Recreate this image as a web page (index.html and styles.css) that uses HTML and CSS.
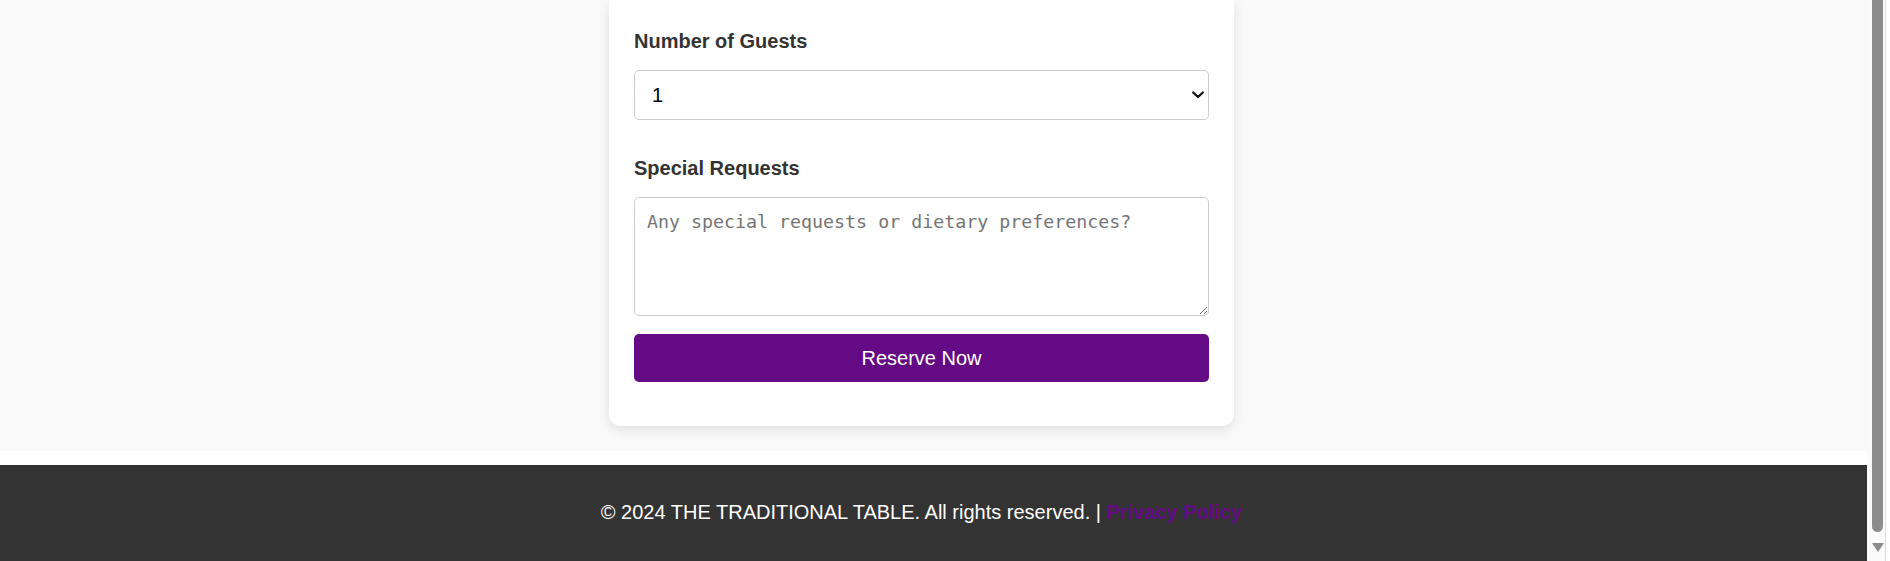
FILE: index.html
```html
<!DOCTYPE html>
<html lang="en">
<head>
<meta charset="utf-8">
<title>Reserve a Table - The Traditional Table</title>
<link rel="stylesheet" href="styles.css">
</head>
<body>
<div class="window">
  <div class="viewport">
    <main class="page">
      <section class="card">
        <form class="form">
          <div class="group">
            <label class="label" for="guests">Number of Guests</label>
            <div class="select-wrap">
              <select class="select" id="guests">
                <option>1</option>
                <option>2</option>
                <option>3</option>
                <option>4</option>
                <option>5</option>
                <option>6</option>
              </select>
              <svg class="chevron" width="12" height="8" viewBox="0 0 12 8" aria-hidden="true">
                <polyline points="1.2,1.5 6,6 10.8,1.5" fill="none" stroke="#111" stroke-width="2.2" stroke-linecap="round" stroke-linejoin="round"/>
              </svg>
            </div>
          </div>
          <div class="group group-last">
            <label class="label" for="requests">Special Requests</label>
            <textarea class="textarea" id="requests" placeholder="Any special requests or dietary preferences?"></textarea>
          </div>
          <button class="button" type="button">Reserve Now</button>
        </form>
      </section>
    </main>
    <div class="gap"></div>
    <footer class="footer">
      <p class="footer-text">© 2024 THE TRADITIONAL TABLE. All rights reserved. | <a class="footer-link" href="#">Privacy Policy</a></p>
    </footer>
  </div>
  <div class="scrollbar">
    <div class="thumb"></div>
    <div class="arrow"></div>
  </div>
  <div class="frame-edge"></div>
</div>
</body>
</html>
```

FILE: styles.css
```css
html, body {
  margin: 0;
  padding: 0;
  height: 100%;
  overflow: hidden;
}

body {
  font-family: "Liberation Sans", Arial, sans-serif;
  color: #333;
  background: #ffffff;
}

.window {
  display: flex;
  height: 561px;
}

.viewport {
  flex: 1;
  display: flex;
  flex-direction: column;
  min-width: 0;
}

.page {
  height: 451px;
  background: #f9f9f9;
  display: flex;
  justify-content: center;
  align-items: flex-start;
  padding-right: 24px;
  flex-shrink: 0;
}

.card {
  width: 625px;
  box-sizing: border-box;
  padding: 25px 25px 44px;
  background: #ffffff;
  border-radius: 0 0 12px 12px;
  box-shadow: 0 4px 12px rgba(0, 0, 0, 0.1);
}

.form {
  margin: 0;
}

.group {
  margin-bottom: 32px;
}

.group-last {
  margin-bottom: 18px;
}

.label {
  display: block;
  font-size: 20px;
  font-weight: bold;
  line-height: 32px;
  color: #333;
  margin-bottom: 13px;
}

.select-wrap {
  position: relative;
}

.select {
  display: block;
  width: 100%;
  height: 50px;
  box-sizing: border-box;
  border: 1px solid #cccccc;
  border-radius: 5px;
  padding: 0 30px 0 17px;
  font-family: "Liberation Sans", Arial, sans-serif;
  font-size: 20px;
  color: #000;
  background-color: #ffffff;
  appearance: none;
  -webkit-appearance: none;
}

.chevron {
  position: absolute;
  right: 5px;
  top: 21px;
  pointer-events: none;
}

.textarea {
  display: block;
  width: 100%;
  height: 119px;
  box-sizing: border-box;
  border: 1px solid #cccccc;
  border-radius: 5px;
  padding: 13px 12px;
  font-family: "DejaVu Sans Mono", "Liberation Mono", monospace;
  font-size: 18.3px;
  color: #000;
  background: #ffffff;
  margin: 0;
}

.textarea::placeholder {
  color: #757575;
}

.button {
  display: block;
  width: 100%;
  height: 48px;
  border: none;
  border-radius: 5px;
  background: #650a85;
  color: #ffffff;
  font-family: "Liberation Sans", Arial, sans-serif;
  font-size: 20px;
  cursor: pointer;
}

.gap {
  height: 14px;
  background: #ffffff;
  flex-shrink: 0;
}

.footer {
  background: #333333;
  padding: 31px 24px 33px 0;
  text-align: center;
  flex-shrink: 0;
}

.footer-text {
  margin: 0;
  font-size: 20px;
  line-height: 32px;
  color: #ffffff;
}

.footer-link {
  color: #650a85;
  font-weight: bold;
  text-decoration: none;
}

.scrollbar {
  width: 19px;
  box-sizing: border-box;
  padding-left: 5px;
  background: #fafafa;
  border-right: 1px solid #dddddd;
  display: flex;
  flex-direction: column;
}

.thumb {
  width: 11px;
  height: 532px;
  background: #8c8c8c;
  border-radius: 0 0 6px 6px;
}

.arrow {
  width: 0;
  height: 0;
  margin-top: 11px;
  border-left: 6px solid transparent;
  border-right: 6px solid transparent;
  border-top: 9px solid #8c8c8c;
}

.frame-edge {
  width: 4px;
  background: #ffffff;
}
```
